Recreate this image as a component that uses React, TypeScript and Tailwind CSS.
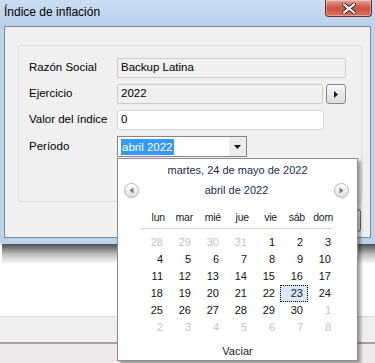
const weeks: [number, boolean][][] = [
  [[28, false], [29, false], [30, false], [31, false], [1, true], [2, true], [3, true]],
  [[4, true], [5, true], [6, true], [7, true], [8, true], [9, true], [10, true]],
  [[11, true], [12, true], [13, true], [14, true], [15, true], [16, true], [17, true]],
  [[18, true], [19, true], [20, true], [21, true], [22, true], [23, true], [24, true]],
  [[25, true], [26, true], [27, true], [28, true], [29, true], [30, true], [1, false]],
  [[2, false], [3, false], [4, false], [5, false], [6, false], [7, false], [8, false]],
];

const weekdays = ['lun', 'mar', 'mié', 'jue', 'vie', 'sáb', 'dom'];

function NavCircle({ dir }: { dir: 'left' | 'right' }) {
  return (
    <div className="w-[15px] h-[15px] rounded-full border border-[#b4b4b4] bg-gradient-to-b from-white to-[#dedede] flex items-center justify-center">
      <svg width="5" height="7" viewBox="0 0 5 7">
        {dir === 'left' ? (
          <path d="M4.5 0.5 L0.5 3.5 L4.5 6.5 Z" fill="#7a7a7a" />
        ) : (
          <path d="M0.5 0.5 L4.5 3.5 L0.5 6.5 Z" fill="#7a7a7a" />
        )}
      </svg>
    </div>
  );
}

export default function App() {
  return (
    <div className="w-[375px] h-[363px] relative overflow-hidden bg-white flex flex-col font-['Liberation_Sans',Arial,sans-serif] text-[11.5px] text-black">
      {/* Window */}
      <div className="h-[244px] shrink-0 relative bg-[#bcd3ec]">
        {/* Title bar */}
        <div className="h-[26px] flex items-center pl-[4px] pb-[2px] bg-gradient-to-b from-[#c9dcf1] via-[#c2d7ef] to-[#bad1eb] text-[12px]">
          Índice de inflación
        </div>
        {/* Close button */}
        <div className="absolute top-0 right-[3px] w-[47px] h-[17px] rounded-b-[4px] border border-t-0 border-[#6e2d26] bg-gradient-to-b from-[#e6a598] via-[#c9503f] to-[#d8705c] flex items-center justify-center shadow-[inset_0_0_0_1px_rgba(255,255,255,0.35)]">
          <svg width="14" height="11" viewBox="0 0 14 11">
            <path d="M2 1.5 L12 9.5 M12 1.5 L2 9.5" stroke="#3b2a2a" strokeWidth="4" strokeLinecap="square" />
            <path d="M2 1.5 L12 9.5 M12 1.5 L2 9.5" stroke="#ffffff" strokeWidth="2" strokeLinecap="square" />
          </svg>
        </div>

        {/* Client area */}
        <div className="mx-[4px] h-[212px] border border-[#7b8a9a] bg-[#f0f0f0] flex flex-col">
          {/* Group box */}
          <div className="mt-[18px] ml-[13px] w-[344px] h-[157px] shrink-0 border border-[#d9dfe5] rounded-[3px] pt-[12px] flex flex-col gap-[6px]">
            <div className="flex items-center h-[20px]">
              <span className="w-[98px] shrink-0 pl-[10px] whitespace-nowrap">Razón Social</span>
              <div className="w-[229px] h-[20px] shrink-0 border border-[#c9ced4] rounded-[2px] bg-[#f0f0f0] flex items-center pl-[3px]">
                Backup Latina
              </div>
            </div>
            <div className="flex items-center h-[20px]">
              <span className="w-[98px] shrink-0 pl-[10px] whitespace-nowrap">Ejercicio</span>
              <div className="w-[206px] h-[20px] shrink-0 border border-[#c9ced4] rounded-[2px] bg-[#f0f0f0] flex items-center pl-[3px]">
                2022
              </div>
              <div className="ml-[3px] w-[20px] h-[20px] shrink-0 border border-[#8a8a8a] rounded-[3px] bg-gradient-to-b from-[#f6f6f6] to-[#dcdcdc] flex items-center justify-center">
                <svg width="4" height="7" viewBox="0 0 4 7">
                  <path d="M0 0 L4 3.5 L0 7 Z" fill="#1a1a2e" />
                </svg>
              </div>
            </div>
            <div className="flex items-center h-[20px]">
              <span className="w-[98px] shrink-0 pl-[10px] whitespace-nowrap">Valor del índice</span>
              <div className="w-[207px] h-[20px] shrink-0 border border-[#d3d8de] rounded-[2px] bg-white flex items-center pl-[3px]">
                0
              </div>
            </div>
            <div className="flex items-center h-[21px]">
              <span className="w-[98px] shrink-0 pl-[10px] whitespace-nowrap">Período</span>
              <div className="w-[130px] h-[21px] shrink-0 border border-[#868686] bg-white flex items-stretch">
                <div className="flex-1 flex items-center pl-[3px]">
                  <span className="bg-[#3399ff] text-white px-px leading-[16px]">abril 2022</span>
                </div>
                <div className="w-[17px] bg-[#ececec] flex items-center justify-center">
                  <svg width="7" height="4" viewBox="0 0 7 4">
                    <path d="M0 0 L7 0 L3.5 4 Z" fill="#111" />
                  </svg>
                </div>
              </div>
            </div>
          </div>
          {/* Button edge peeking out from behind the popup */}
          <div className="mt-[7px] ml-[276px] w-[80px] h-[23px] shrink-0 border border-[#707070] rounded-[3px] bg-gradient-to-b from-[#f2f2f2] to-[#dddddd]" />
        </div>
      </div>

      {/* Window shadow */}
      <div className="h-[20px] shrink-0 ml-[2px] bg-gradient-to-b from-[#505050] via-[#bdbdbd] to-white" />
      <div className="flex-1 bg-white" />
      <div className="h-[26px] shrink-0 border-t border-[#dadada] bg-[#efefef]" />
      <div className="h-[21px] shrink-0 border-t-2 border-[#a3a3a3] bg-[#f0ebeb]" />

      {/* Calendar dropdown */}
      <div className="absolute left-[117px] top-[158px] w-[241px] h-[203px] border border-[#8e8e8e] bg-white shadow-[3px_3px_3px_rgba(0,0,0,0.35)] flex flex-col text-[11px] text-[#1b1b2b]">
        <div className="h-[22px] flex items-center justify-center text-[#1b2a56]">
          martes, 24 de mayo de 2022
        </div>
        <div className="h-[18px] flex items-center justify-between pl-[6px] pr-[8px]">
          <NavCircle dir="left" />
          <span className="text-[#1b2a56]">abril de 2022</span>
          <NavCircle dir="right" />
        </div>
        <div className="mt-[11px] ml-[22px] w-[196px] h-[16px] grid grid-cols-7 items-center text-[10.5px] tracking-[-0.2px]">
          {weekdays.map((d) => (
            <span key={d} className="text-right pr-[3px] whitespace-nowrap">
              {d}
            </span>
          ))}
        </div>
        <div className="mt-[2px] ml-[23px] w-[192px] border-t border-[#d6d6d6]" />
        <div className="mt-[5px] ml-[22px] w-[196px] grid grid-cols-7">
          {weeks.flat().map(([n, cur], i) => {
            const selected = cur && n === 23;
            return (
              <div
                key={i}
                className={
                  selected
                    ? 'h-[17px] flex items-center justify-end pr-[4px] bg-[#dce7f9] border border-dotted border-black'
                    : 'h-[17px] flex items-center justify-end pr-[4px] border border-transparent ' +
                      (cur ? 'text-[#111]' : 'text-[#c4c4c4]')
                }
              >
                {n}
              </div>
            );
          })}
        </div>
        <div className="mt-[7px] h-[16px] flex items-center justify-center">Vaciar</div>
      </div>
    </div>
  );
}
